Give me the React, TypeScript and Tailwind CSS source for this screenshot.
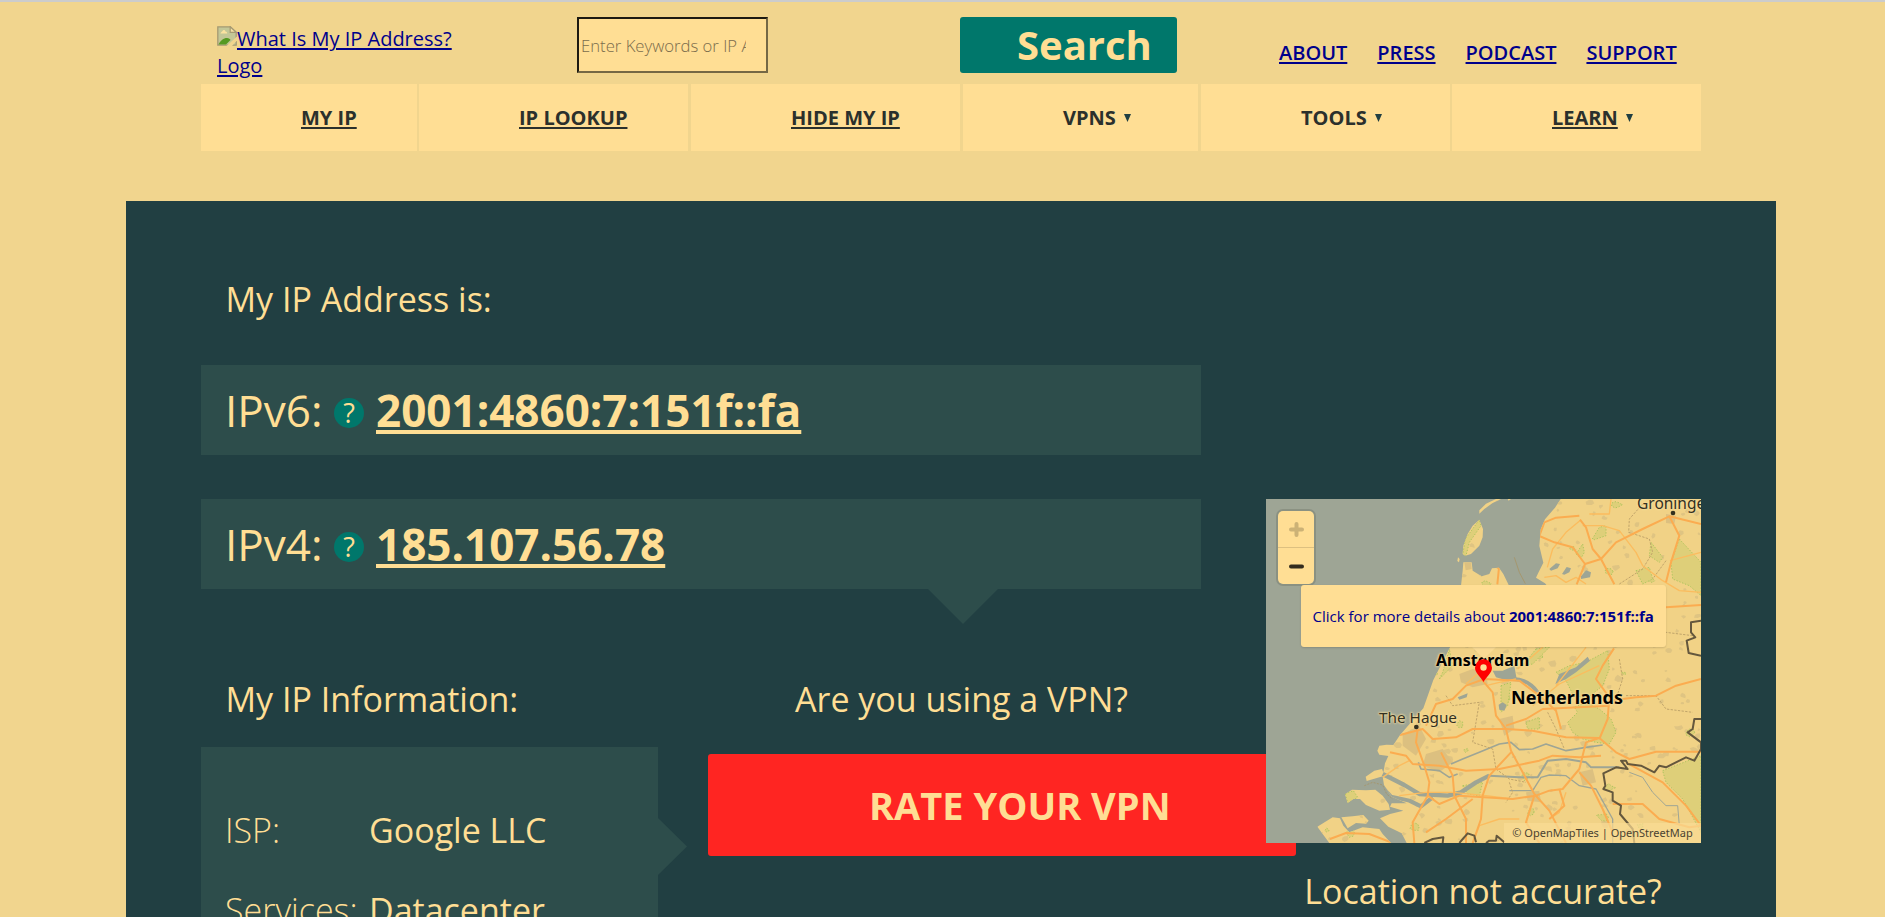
import React from "react";

type NavItem = { label: string; cell: string; link?: boolean; menu?: boolean };

const NAV: NavItem[] = [
  { label: "MY IP", cell: "w-[216px] pl-[100px] mr-[2px]", link: true },
  { label: "IP LOOKUP", cell: "w-[269px] pl-[100px] mr-[3px]", link: true },
  { label: "HIDE MY IP", cell: "w-[269px] pl-[100px] mr-[3px]", link: true },
  { label: "VPNS", cell: "w-[235px] pl-[100px] mr-[3px]", menu: true },
  { label: "TOOLS", cell: "w-[249px] pl-[100px] mr-[2px]", menu: true },
  { label: "LEARN", cell: "w-[249px] pl-[100px]", link: true, menu: true },
];

const TOP_LINKS = ["ABOUT", "PRESS", "PODCAST", "SUPPORT"];

function BrokenImage() {
  return (
    <svg className="inline-block h-5 w-5 align-baseline" viewBox="0 0 20 20">
      <path d="M.8.8h12.600l5.800 5.400v13H.8z" fill="#c3c797" stroke="#a59a72" strokeWidth="1.300" />
      <path d="M13.200.8v5.600h6z" fill="#f3dfa4" stroke="#a59a72" strokeWidth="1.200" />
      <path d="M3.500 7.500c.2-1.600 1.600-1.600 2-2.600.8-1.400 2.600-.8 2.900.5 1.500 0 1.800 1 1.800 2.100z" fill="#fbe3a0" />
      <path d="M1.500 18.500c2-4 5-6.500 8.500-6.500 2 0 3 1 3.500 2l-4.500 4.500z" fill="#559a22" />
      <path d="M20 10.500v4l-5 5.500H9.500z" fill="#f1d58e" />
    </svg>
  );
}

function Header() {
  return (
    <header className="ml-[201px] w-[1500px]">
      <div className="flex h-[82px] items-start">
        <a href="#" className="ml-4 mt-[23px] block w-[260px] text-[20px] leading-[27.200px] text-[#00008b] underline decoration-2 underline-offset-2">
          <BrokenImage />
          What Is My IP Address?
          <br />
          Logo
        </a>
        <input
          placeholder="Enter Keywords or IP Address"
          className="ml-[100px] mt-[15px] h-14 w-[191px] border-2 border-b-[#756845] border-l-[#1c1a12] border-r-[#756845] border-t-[#1c1a12] bg-[#ffde94] pl-[2px] pr-5 text-[16.700px] font-light text-[#2b2b2b] placeholder:text-[#7a6c4c]"
        />
        <button className="ml-[192px] mt-[15px] h-14 w-[217px] rounded-[3px] bg-[#00776b] pl-[57px] text-left text-[40px] font-bold leading-[56px] text-[#ffde94]">
          Search
        </button>
        <nav className="ml-[102px] mt-[37px] flex gap-[30px] text-[20px] font-semibold leading-[28px] text-[#00008b]">
          {TOP_LINKS.map((t) => (
            <a key={t} href="#" className="underline decoration-2 underline-offset-2">
              {t}
            </a>
          ))}
        </nav>
      </div>
      <nav className="flex h-[67px]">
        {NAV.map((n) => (
          <div key={n.label} className={`flex h-full items-center bg-[#ffde94] text-[20px] font-bold text-[#2b302c] ${n.cell}`}>
            <span className={n.link ? "underline decoration-2 underline-offset-2" : ""}>{n.label}</span>
            {n.menu && (
              <svg className="ml-2 h-2 w-[7px]" viewBox="0 0 7 8">
                <path d="M0 0h7L3.500 8z" fill="#213f42" />
              </svg>
            )}
          </div>
        ))}
      </nav>
    </header>
  );
}

function Help() {
  return (
    <span className="mt-[5px] flex h-[30px] w-[30px] items-center justify-center rounded-full bg-[#00776b] text-[27px] leading-none text-[#ffde94]">
      ?
    </span>
  );
}

function IpRow({ label, value }: { label: string; value: string }) {
  return (
    <div className="flex h-[90px] w-[1000px] items-center bg-[#2d4d4b] pl-6 text-[44px] text-[#ffde94]">
      <span className="w-[109px]">{label}</span>
      <Help />
      <a href="#" className="ml-3 font-bold underline decoration-4 underline-offset-[3px]">
        {value}
      </a>
    </div>
  );
}

/* Deterministic scatter of built-up areas and woodland over the land. */
function scatter(count: number, seed: number, size: number): string[] {
  let s = seed;
  const next = () => {
    s = (s * 16807) % 2147483647;
    return s / 2147483647;
  };
  const shapes: string[] = [];
  for (let i = 0; i < count; i++) {
    const x = 150 + next() * 1150;
    const y = next() * 1030;
    const pts: string[] = [];
    const r = size * (0.5 + next());
    for (let k = 0; k < 7; k++) {
      const a = (k / 7) * Math.PI * 2;
      const d = r * (0.5 + next() * 0.7);
      pts.push(`${(x + Math.cos(a) * d).toFixed(0)},${(y + Math.sin(a) * d * 0.8).toFixed(0)}`);
    }
    shapes.push(pts.join(" "));
  }
  return shapes;
}

const TOWNS = scatter(420, 4711, 9);
const WOODS = scatter(34, 919, 12);

const MAINLAND =
  "M884 0L867 26 837 61 824 91 820 141 832 191 817 221 810 236 837 253 900 330 760 330 727 256 712 225 699 206 678 208 670 225 647 232 620 215 617 190 592 190 590 215 585 260 570 360 552 445 502 543 472 628 402 708 382 738 362 737 340 740 334 755 340 767 367 771 357 793 350 833 354 858 377 893 422 913 377 913 372 923 412 935 372 945 342 958 367 983 407 1003 422 1032H1305V0z";
const ISLANDS = [
  "M640 62L651 90 650 115 640 140 615 165 598 170 590 165 592 140 605 105 620 80z",
  "M640 44L655 30 680 12 705 0 690 0 660 14 640 34z",
  "M725 0L735 0 728 5z",
  "M576 175L581 180 579 190 574 186z",
  "M299 833L325 815 348 810 356 830 330 838 302 846z",
  "M237 886L258 872 300 874 328 872 350 890 368 915 372 932 340 935 300 918 282 900 262 900 245 912z",
  "M154 983L200 955 222 958 232 980 250 1000 290 985 340 990 350 1005 375 1032 190 1032z",
  "M226 955L260 952 292 948 308 965 300 974 270 972 245 988z",
];

function NetherlandsMap() {
  return (
    <svg className="block h-[344px] w-[435px]" viewBox="0 0 1305 1032" fill="none" strokeLinejoin="round">
      <defs>
        <clipPath id="land">
          <path d={MAINLAND} />
          {ISLANDS.map((d) => (
            <path key={d} d={d} />
          ))}
        </clipPath>
      </defs>
      <path d="M0 0H1305V1032H0z" fill="#9ea595" />
      <g clipPath="url(#land)">
        <path d="M0 0H1305V1032H0z" fill="#f1d286" />
        {TOWNS.map((p) => (
          <polygon key={p} points={p} fill="#dfc482" />
        ))}
        {/* heath and forest */}
        <g fill="#decf79" stroke="#aec45e" strokeWidth="3" strokeDasharray="4 5">
          {WOODS.map((p) => (
            <polygon key={p} points={p} />
          ))}
          <path d="M905 670L935 640 925 625 960 610 1000 630 1035 660 1050 700 1030 735 990 730 950 720 920 700z" />
          <path d="M870 520L910 500 960 490 1025 455 1030 510 1010 560 960 600 920 585 900 545z" />
          <path d="M1240 120L1305 190 1305 290 1270 260 1220 240 1215 190z" />
          <path d="M1190 815L1305 770V1000L1250 900 1200 850z" />
          <path d="M1110 215L1150 205 1160 240 1130 255z" />
          <path d="M1155 130L1190 175 1180 190 1150 170z" />
          <path d="M979 120L1000 85 1020 80 1020 110 985 122z" />
          <path d="M930 165L950 135 955 160 945 178z" />
          <path d="M810 450L852 443 800 495 770 500z" />
          <path d="M705 560L735 550 725 620 705 640z" />
          <path d="M780 670L820 655 820 690 785 690z" />
          <path d="M590 860L650 850 640 890 605 885z" />
          <path d="M520 540L560 500 550 450 530 520z" />
          <path d="M590 170L598 120 640 62 645 80 610 130 600 170z" />
          <path d="M238 884L262 875 275 895 245 912z" />
        </g>
        {/* larger towns */}
        <g fill="#dcc080">
          <path d="M580 525L620 510 660 520 665 555 620 565 585 550z" />
          <path d="M700 660L740 650 745 690 715 710z" />
          <path d="M410 705L460 680 480 720 450 770 410 740z" />
          <path d="M480 765L530 750 560 790 520 820 470 800z" />
          <path d="M940 820L980 810 990 850 950 860z" />
          <path d="M780 880L820 875 825 910 785 905z" />
          <path d="M1200 45L1230 50 1225 75 1200 72z" />
          <path d="M595 190h20l2 20-18 4z" />
        </g>
        {/* lakes and estuaries */}
        <g fill="#9ea595">
          <path d="M680 515L710 515 745 500 752 540 725 545 690 535z" />
          <path d="M868 555L880 525 930 505 965 473 972 485 930 520 900 540z" />
          <path d="M698 617L710 610 722 618 715 635 700 632z" />
          <path d="M575 595L605 583 602 595 580 602z" />
          <path d="M850 210L870 193 882 195 875 208 855 215z" />
          <path d="M888 225L902 204 915 208 910 220 895 227z" />
          <path d="M945 232L960 214 975 220 972 235 945 240z" />
        </g>
        <g stroke="#9ea595">
          <path d="M740 540C780 540 800 560 815 580" strokeWidth="12" />
          <path d="M350 825L415 858 460 885 545 890 585 880 630 850 670 830" strokeWidth="13" />
          <path d="M340 855L375 893 430 905 465 922 500 895" strokeWidth="12" />
          <path d="M670 830L760 835 815 835 845 785 900 780 960 790 975 805 1060 805" strokeWidth="6" />
          <path d="M555 795L590 780 640 760 700 735 735 730 760 752 800 750 840 735 900 755 960 745 1010 738" strokeWidth="5" />
          <path d="M730 875H800L825 835 850 828 900 830 940 860 990 870 1040 960V1032" strokeWidth="4" />
          <path d="M457 790L465 810 520 815 550 835 575 825" strokeWidth="5" />
          <path d="M1090 820L1130 835 1160 880 1200 920 1235 920 1240 980" strokeWidth="3" />
        </g>
        {/* province limits */}
        <g stroke="#c0a46a" strokeWidth="3" strokeDasharray="7 4">
          <path d="M1130 15L1090 60 1088 100 1150 120 1160 160 1130 210 1060 255" />
          <path d="M1200 185L1160 240M540 590L560 620 640 610 630 670 620 730 680 750 690 810 730 840 780 850" />
          <path d="M845 640L870 690 895 750M1080 590H1170L1200 630 1280 640M1150 430L1200 400 1280 410" />
          <path d="M730 850L740 880 720 910M1060 480L1070 540 1050 600" />
        </g>
        {/* minor roads */}
        <g stroke="#fbbc5e" strokeWidth="4">
          <path d="M844 205L860 150 900 100 945 62M970 45H1030L1035 0M950 80H1010L1060 95 1110 160 1130 200 1190 245 1240 275 1305 280" />
          <path d="M835 235L870 230 900 250 930 235 960 255M1212 185L1305 160" />
          <path d="M755 510L830 445M870 560L960 445M800 620L880 555 1000 500" />
          <path d="M590 500L620 470 640 520 600 555M660 560L700 550 750 540" />
          <path d="M350 835L400 800 430 785M400 890L480 880 560 880 660 890 740 900" />
          <path d="M620 1032L640 980 700 960 760 960M850 960L880 940 900 880" />
        </g>
        {/* motorways */}
        <g stroke="#fbac50" strokeWidth="6">
          <path d="M692 208L760 150 820 111 835 70 870 56 940 50M820 111L865 130 920 145 957 195 1005 180 1050 130 1130 90 1210 52 1305 75" />
          <path d="M942 62L960 85 980 150 1005 180 1045 256M957 195L932 256M694 256L699 206M1210 52L1240 110 1215 190 1200 250" />
          <path d="M1150 332L1200 325 1305 318M625 200L650 230" />
          <path d="M1044 448L1010 500 990 540 1030 595 1025 660 1000 720" />
          <path d="M1030 605L1110 595 1170 590 1230 560 1305 540" />
          <path d="M402 708L470 690 500 720 570 715 620 690 720 690 800 695 900 715 1000 717 1050 760 1090 780 1170 758H1305" />
          <path d="M650 545L680 580 690 650 720 690 735 755 770 820 805 885 850 935 900 1032" />
          <path d="M655 540L600 560 560 600 510 615 480 680M655 540L760 545 820 590 870 635 885 690M720 680L780 660 830 630 1030 620" />
          <path d="M372 760L420 770 440 795 520 800 600 815 700 810 820 785 860 770 940 775 1005 770" />
          <path d="M455 690L450 730 475 800 490 850 485 890 440 970 445 1032" />
          <path d="M525 760L560 830 565 890 600 960 600 1032" />
          <path d="M735 760L670 830 650 890 645 960 620 1032" />
          <path d="M485 890L520 915 580 890 740 900 810 890 850 875 890 870 940 810 960 730 1000 717M940 820L975 860 1010 930 1040 1000" />
          <path d="M1040 915L1130 915 1180 960 1270 985 1305 980M1080 790L1190 850 1260 920 1305 980" />
          <path d="M805 890L780 970 820 1032M480 1000L540 960 620 900M880 870L895 920 850 960" />
          <path d="M192 1020L240 1002 310 1005 380 1032" />
        </g>
        {/* state border */}
        <g stroke="#64573d" strokeWidth="6">
          <path d="M1305 365L1275 370 1275 400 1288 415 1262 425 1268 462 1305 470" />
          <path d="M1305 660H1285L1280 690 1265 700 1305 730V750L1285 785 1260 775 1200 805 1180 800 1165 820 1125 800 1085 795 1080 785 1065 785 1085 810 1050 805 1012 823 1018 860 1012 870 1040 880 1040 905 1065 920 1062 945 1100 990 1105 1032" />
          <path d="M475 1032L500 1020 532 1015 530 1032M580 1032L605 1003 625 1010 630 1030M660 1032L670 1025 690 1025 692 1010 715 1030" />
        </g>
      </g>
      <path d="M745 175L760 220 778 254" stroke="#a5976f" strokeWidth="3" />
      <g stroke="#a5976f" strokeWidth="3" strokeDasharray="6 4">
        <path d="M295 860L320 850 350 858 362 885 380 900" />
      </g>
      <circle cx="1221" cy="42" r="7" fill="#33301f" />
      <circle cx="451" cy="684" r="7" fill="#33301f" />
    </svg>
  );
}

const HALO = "[text-shadow:0_0_2px_#f6dc9a,0_0_2px_#f6dc9a,0_0_3px_#f6dc9a]";

function MapCard() {
  return (
    <div className="relative h-[344px] w-[435px] overflow-hidden font-['Noto_Sans',sans-serif]">
      <NetherlandsMap />
      <span className={`absolute left-[371px] top-[-7px] whitespace-nowrap text-[15.500px] leading-[22px] text-[#33301f] ${HALO}`}>Groningen</span>
      <span className={`absolute left-[170px] top-[150px] whitespace-nowrap text-[16px] font-bold leading-[22px] text-black ${HALO}`}>Amsterdam</span>
      <span className={`absolute left-[245px] top-[186px] whitespace-nowrap text-[18px] font-bold leading-[24px] text-black ${HALO}`}>Netherlands</span>
      <span className={`absolute left-[113px] top-[207px] whitespace-nowrap text-[15.300px] leading-[22px] text-[#33301f] ${HALO}`}>The Hague</span>

      <div className="absolute left-3 top-3 h-[73px] w-9 rounded-[5px] bg-[#ffde94] shadow-[0_0_0_2px_rgba(0,0,0,0.120)]">
        <div className="flex h-9 items-center justify-center">
          <svg className="h-[15px] w-[15px]" viewBox="0 0 15 15" stroke="#ccb276" strokeWidth="4" strokeLinecap="round">
            <path d="M2 7.500h11M7.500 2v11" />
          </svg>
        </div>
        <div className="flex h-[37px] items-center justify-center border-t border-[#ddc080]">
          <svg className="h-[15px] w-[15px]" viewBox="0 0 15 15" stroke="#332c1e" strokeWidth="4" strokeLinecap="round">
            <path d="M2 7.500h11" />
          </svg>
        </div>
      </div>

      <div className="absolute left-[206px] top-[148px] h-0 w-0 border-x-[12px] border-t-[12px] border-x-transparent border-t-[#fadb94]" />
      <svg className="absolute left-[208px] top-[160px] h-[24px] w-[19px]" viewBox="0 0 19 24">
        <path d="M9.500 23C7 18 1 14 1 8.700a8.500 8.500 0 0117 0C18 14 12 18 9.500 23z" fill="#ff0000" />
        <circle cx="9.500" cy="8.500" r="3.200" fill="#ffde94" />
      </svg>

      <a
        href="#"
        className="absolute left-[34.500px] top-[86px] flex h-[62px] w-[365.500px] items-center justify-center whitespace-pre rounded-[3px] bg-[#ffde94] font-['Open_Sans',sans-serif] text-[15px] text-[#00008b] shadow-[0_1px_2px_rgba(0,0,0,0.150)]"
      >
        Click for more details about <b className="font-bold">2001:4860:7:151f::fa</b>
      </a>

      <div className="absolute bottom-0 right-0 flex h-5 w-[197px] items-center justify-center whitespace-nowrap bg-[#fadb94]/70 text-[11px] text-[#4a4230]">
        © OpenMapTiles | OpenStreetMap
      </div>
    </div>
  );
}

function Info({ k, v }: { k: string; v: string }) {
  return (
    <div className="flex h-20 items-center">
      <span className="w-[144px] font-light">{k}</span>
      <span className="font-medium">{v}</span>
    </div>
  );
}

export default function App() {
  return (
    <div className="h-[917px] overflow-hidden border-t-2 border-[#cccccc] bg-[#f1d58e] font-['Open_Sans',sans-serif]">
      <Header />
      <main className="ml-[126px] mt-[50px] h-[716px] w-[1650px] bg-[#213f42] px-[75px] pt-[74px] text-[#ffde94]">
        <h1 className="h-[90px] pl-[24.500px] text-[34px] leading-[48px]">My IP Address is:</h1>
        <IpRow label="IPv6:" value="2001:4860:7:151f::fa" />
        <div className="mt-11 flex justify-between">
          <div className="w-[1000px]">
            <IpRow label="IPv4:" value="185.107.56.78" />
            <div className="ml-[727px] h-[35px] w-[70px] bg-[#2d4d4b] [clip-path:polygon(0_0,100%_0,50%_100%)]" />
            <div className="mt-[51px] flex items-start">
              <section className="w-[457px]">
                <h2 className="h-[72px] pl-[24.500px] text-[34px] leading-[48px]">My IP Information:</h2>
                <div className="relative h-[190px] bg-[#2d4d4b] pl-6 pt-[43px] text-[34px]">
                  <Info k="ISP:" v="Google LLC" />
                  <Info k="Services:" v="Datacenter" />
                  <div className="absolute left-full top-[71px] h-[57px] w-[29px] bg-[#2d4d4b] [clip-path:polygon(0_0,100%_50%,0_100%)]" />
                </div>
              </section>
              <section className="ml-[50px] w-[493px]">
                <h2 className="h-[79px] pl-[87px] text-[34px] leading-[48px]">Are you using a VPN?</h2>
                <button className="h-[102px] w-[588px] rounded-[3px] bg-[#ff2522] pl-[161px] text-left text-[38px] font-bold text-[#ffde94]">
                  RATE YOUR VPN
                </button>
              </section>
            </div>
          </div>
          <aside className="relative w-[435px]">
            <MapCard />
            <h2 className="mt-[24px] pr-px text-center text-[34px] leading-[48px]">Location not accurate?</h2>
          </aside>
        </div>
      </main>
    </div>
  );
}
